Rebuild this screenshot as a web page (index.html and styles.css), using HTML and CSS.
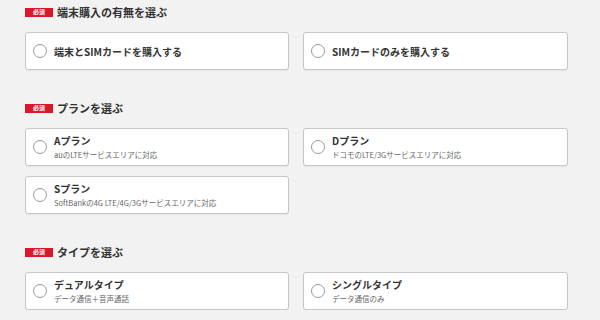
FILE: index.html
```html
<!DOCTYPE html>
<html lang="ja">
<head>
  <meta charset="UTF-8" />
  <title>お申し込み</title>
  <link rel="stylesheet" href="styles.css">
</head>
<body>
  <div class="section">
    <h3 class="heading"><span class="badge">必須</span>端末購入の有無を選ぶ</h3>
    <div class="options">
      <label class="option">
        <span class="radio"></span>
        <span class="text"><span class="title">端末とSIMカードを購入する</span></span>
      </label>
      <label class="option">
        <span class="radio"></span>
        <span class="text"><span class="title">SIMカードのみを購入する</span></span>
      </label>
    </div>
  </div>

  <div class="section">
    <h3 class="heading"><span class="badge">必須</span>プランを選ぶ</h3>
    <div class="options">
      <label class="option">
        <span class="radio"></span>
        <span class="text">
          <span class="title">Aプラン</span>
          <span class="sub">auのLTEサービスエリアに対応</span>
        </span>
      </label>
      <label class="option">
        <span class="radio"></span>
        <span class="text">
          <span class="title">Dプラン</span>
          <span class="sub">ドコモのLTE/3Gサービスエリアに対応</span>
        </span>
      </label>
      <label class="option">
        <span class="radio"></span>
        <span class="text">
          <span class="title">Sプラン</span>
          <span class="sub">SoftBankの4G LTE/4G/3Gサービスエリアに対応</span>
        </span>
      </label>
    </div>
  </div>

  <div class="section">
    <h3 class="heading"><span class="badge">必須</span>タイプを選ぶ</h3>
    <div class="options">
      <label class="option">
        <span class="radio"></span>
        <span class="text">
          <span class="title">デュアルタイプ</span>
          <span class="sub">データ通信＋音声通話</span>
        </span>
      </label>
      <label class="option">
        <span class="radio"></span>
        <span class="text">
          <span class="title">シングルタイプ</span>
          <span class="sub">データ通信のみ</span>
        </span>
      </label>
    </div>
  </div>
</body>
</html>
```

FILE: styles.css
```css
* {
  margin: 0;
  padding: 0;
  box-sizing: border-box;
}

body {
  background: #f2f2f2;
  color: #333;
  font-family: "Noto Sans CJK JP", "Noto Sans", sans-serif;
  padding: 4px 0 0 25px;
}

.section {
  margin-bottom: 30px;
}

.section:last-child {
  margin-bottom: 0;
}

.heading {
  display: flex;
  align-items: center;
  height: 16px;
  font-size: 11px;
  font-weight: bold;
  margin-bottom: 12px;
}

.badge {
  display: inline-flex;
  align-items: center;
  justify-content: center;
  width: 28px;
  height: 9px;
  margin-right: 4px;
  background: #d7192b;
  color: #fff;
  font-size: 6px;
  font-weight: bold;
  line-height: 1;
}

.options {
  display: grid;
  grid-template-columns: 264px 265px;
  column-gap: 14px;
  row-gap: 10px;
}

.option {
  display: flex;
  align-items: center;
  height: 38px;
  padding: 5px 7px;
  background: #fff;
  border: 1px solid #c6c6c6;
  border-radius: 3px;
  box-shadow: 0 1px 1px rgba(0, 0, 0, 0.05);
}

.radio {
  flex: none;
  width: 14px;
  height: 14px;
  border: 1px solid #9a9a9a;
  border-radius: 50%;
  margin-right: 7px;
}

.text {
  display: flex;
  flex-direction: column;
}

.title {
  font-size: 10px;
  font-weight: bold;
  line-height: 13px;
}

.sub {
  font-size: 7.5px;
  color: #666;
  line-height: 11px;
  margin-top: 2px;
}
```
